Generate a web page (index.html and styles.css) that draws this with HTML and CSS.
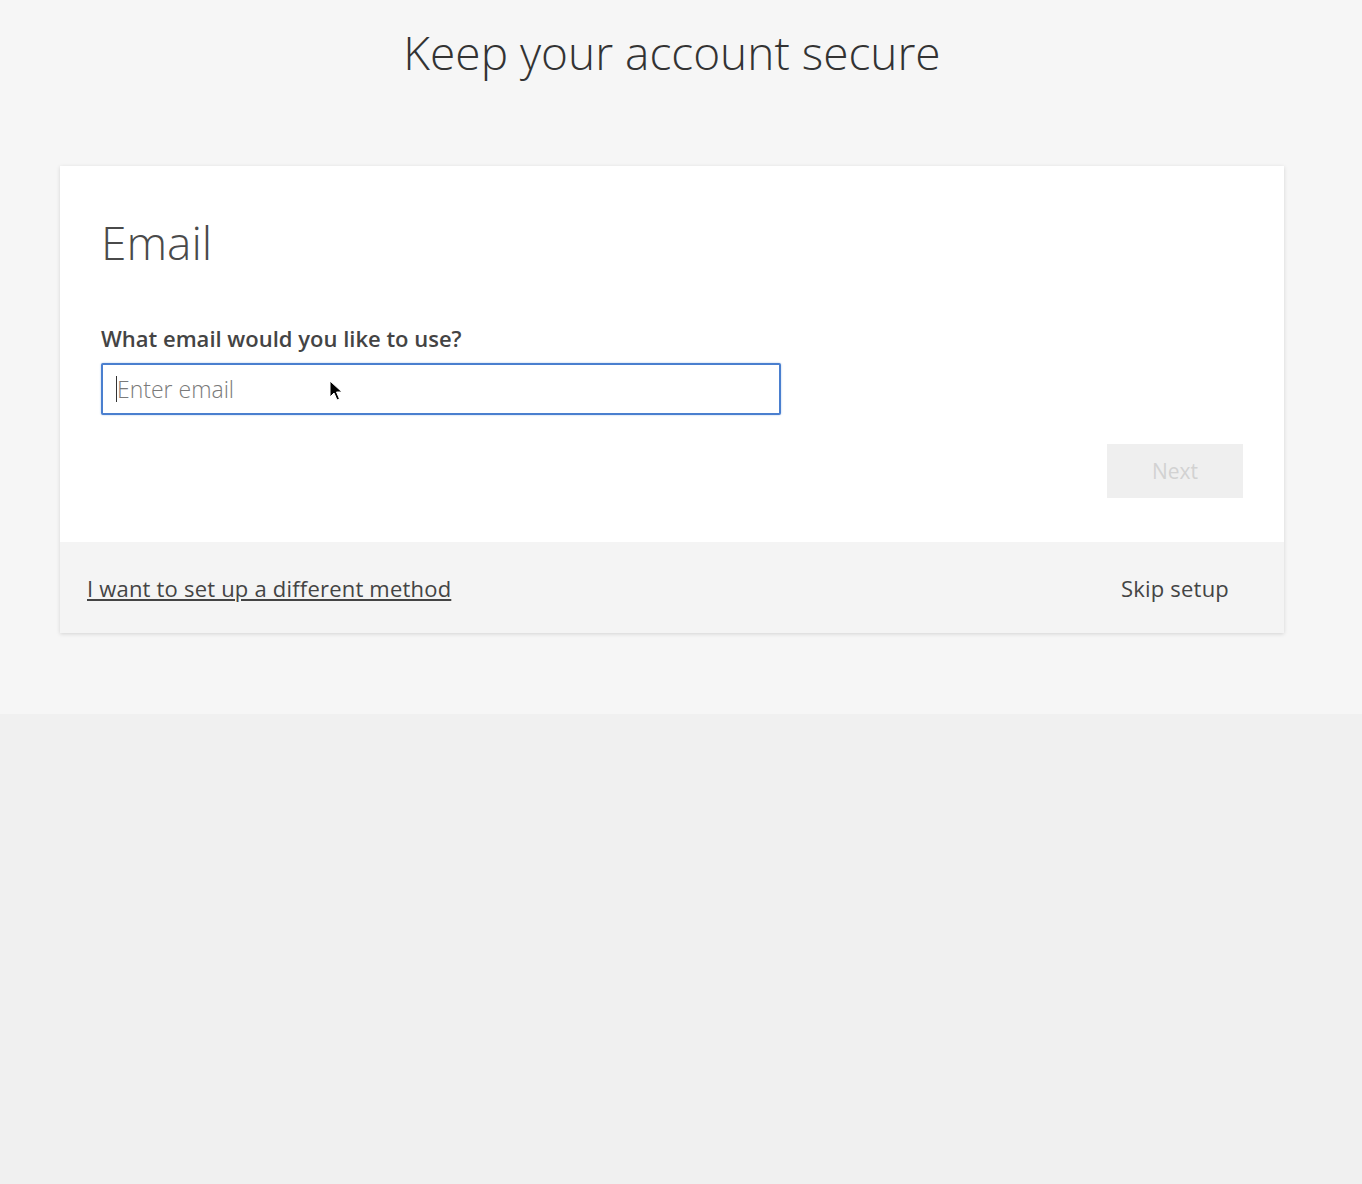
FILE: index.html
```html
<!DOCTYPE html>
<html>
<head>
    <title>Keep your account secure</title>
    <link rel="stylesheet" href="styles.css">
</head>
<body>
    <div class="page-top">
        <h1 class="page-title">Keep your account secure</h1>
        <div class="setup-card">
            <div class="card-body">
                <h2 class="card-title">Email</h2>
                <label class="field-label" for="email">What email would you like to use?</label>
                <div class="input-wrap">
                    <input type="text" id="email" class="email-input" placeholder="Enter email">
                    <span class="caret"></span>
                    <svg class="mouse-cursor" width="14" height="22" viewBox="0 0 14 22">
                        <path d="M1 1 L1 17 L5 13 L8 20 L10.5 19 L7.5 12 L13 12 Z" fill="#000" stroke="#fff" stroke-width="1"/>
                    </svg>
                </div>
                <div class="actions">
                    <button class="next-button" disabled>Next</button>
                </div>
            </div>
            <div class="card-footer">
                <a href="#" class="method-link">I want to set up a different method</a>
                <a href="#" class="skip-link">Skip setup</a>
            </div>
        </div>
    </div>
</body>
</html>
```

FILE: styles.css
```css
body {
    margin: 0;
    font-family: "Open Sans", "Noto Sans", sans-serif;
    background-color: #f0f0f0;
    color: #333;
}
.page-top {
    height: 714px;
    box-sizing: border-box;
    padding-top: 21px;
    background-color: #f6f6f6;
}
.page-title {
    margin: 0;
    padding-right: 18px;
    text-align: center;
    font-size: 46px;
    font-weight: 300;
    line-height: 62px;
    color: #333;
}
.setup-card {
    margin: 83px 0 0 60px;
    width: 1224px;
    background-color: #fff;
    box-shadow: 0 1px 4px rgba(0, 0, 0, 0.14);
}
.card-body {
    padding: 47px 41px 44px 41px;
}
.card-title {
    margin: 0;
    font-size: 46px;
    font-weight: 300;
    line-height: 58px;
    color: #4a4a4a;
}
.field-label {
    display: block;
    margin-top: 53px;
    font-size: 22px;
    font-weight: 600;
    line-height: 28px;
    color: #444;
}
.input-wrap {
    position: relative;
    margin-top: 11px;
    width: 680px;
}
.email-input {
    display: block;
    width: 100%;
    height: 52px;
    box-sizing: border-box;
    border: 2px solid #4a7fcf;
    border-radius: 2px;
    padding: 0 14px;
    font-family: inherit;
    font-size: 23px;
    font-weight: 300;
    color: #333;
    outline: none;
    box-shadow: 0 0 2px rgba(43, 108, 196, 0.4);
}
.email-input::placeholder {
    color: #7a7a7a;
}
.caret {
    position: absolute;
    left: 15px;
    top: 13px;
    width: 1px;
    height: 26px;
    background-color: #333;
}
.mouse-cursor {
    position: absolute;
    left: 228px;
    top: 17px;
}
.actions {
    display: flex;
    justify-content: flex-end;
    margin-top: 29px;
}
.next-button {
    width: 136px;
    height: 54px;
    border: none;
    background-color: #efefef;
    color: #d2d2d2;
    font-family: inherit;
    font-size: 21px;
}
.card-footer {
    display: flex;
    justify-content: space-between;
    align-items: center;
    height: 91px;
    padding: 0 55px 0 27px;
    background-color: #f4f4f4;
}
.card-footer a {
    font-size: 22px;
    letter-spacing: 0.2px;
    color: #444;
}
.method-link {
    text-decoration: underline;
}
.skip-link {
    text-decoration: none;
}
```
